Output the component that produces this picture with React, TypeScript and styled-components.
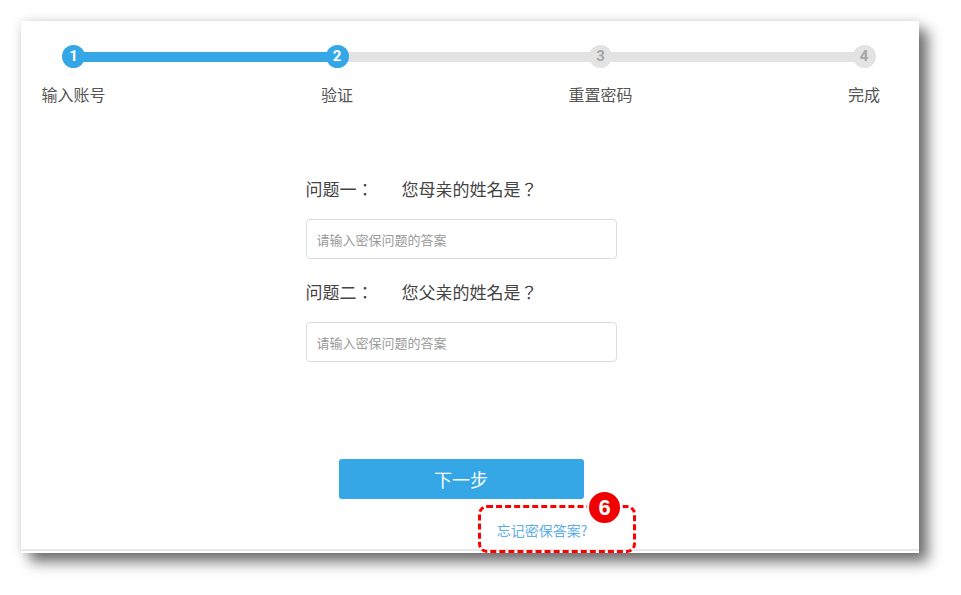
import React from "react";
import styled, { createGlobalStyle } from "styled-components";

const GlobalStyle = createGlobalStyle`
  html, body { margin: 0; padding: 0; background: #fff; }
  body {
    font-family: "Noto Sans CJK SC", "Noto Sans", "Liberation Sans", sans-serif;
    -webkit-font-smoothing: antialiased;
  }
  * { box-sizing: border-box; }
`;

const BLUE = "#35a6e6";
const GRAY = "#e3e3e3";

const Page = styled.div`
  padding: 21px 0 0 21px;
  width: 961px;
  height: 595px;
`;

const Card = styled.div`
  position: relative;
  width: 898px;
  height: 532px;
  background: #fff;
  padding-bottom: 2px;
  display: flex;
  flex-direction: column;
  box-shadow: 0 0 10px rgba(0, 0, 0, 0.12), 9px 9px 13px rgba(0, 0, 0, 0.55);
`;

const Content = styled.div`
  flex: 1;
  display: flex;
  flex-direction: column;
  border-bottom: 2px solid #e8e8e8;
`;

const Steps = styled.div<{ $progress: number }>`
  position: relative;
  display: flex;
  justify-content: space-between;
  margin: 24px 15px 0 12.5px;

  &::before {
    content: "";
    position: absolute;
    top: 6.5px;
    left: 40px;
    right: 40px;
    height: 10px;
    background: linear-gradient(
      to right,
      ${BLUE} 0,
      ${BLUE} ${(p) => p.$progress}%,
      ${GRAY} ${(p) => p.$progress}%,
      ${GRAY} 100%
    );
  }
`;

const Step = styled.div`
  width: 80px;
  display: flex;
  flex-direction: column;
  align-items: center;
`;

const Dot = styled.div<{ $active: boolean }>`
  position: relative;
  z-index: 1;
  width: 23px;
  height: 23px;
  border-radius: 50%;
  background: ${(p) => (p.$active ? BLUE : GRAY)};
  color: ${(p) => (p.$active ? "#fff" : "#a6a6a6")};
  font-family: "Roboto", "Liberation Sans", sans-serif;
  font-weight: 700;
  font-size: 15px;
  line-height: 23px;
  text-align: center;
`;

const StepLabel = styled.div`
  margin-top: 15px;
  font-size: 16px;
  line-height: 22px;
  color: #555;
  white-space: nowrap;
`;

const Body = styled.div`
  display: flex;
  flex-direction: column;
  align-items: center;
  padding-right: 18px;
`;

const Form = styled.div`
  width: 311px;
  margin-top: 72px;
  display: flex;
  flex-direction: column;
`;

const QuestionRow = styled.div<{ $first?: boolean }>`
  display: flex;
  margin-top: ${(p) => (p.$first ? "0" : "21px")};
  font-family: "Noto Sans CJK TC", "Noto Sans CJK SC", sans-serif;
  font-size: 17px;
  line-height: 24px;
  color: #444;
`;

const QLabel = styled.span`
  width: 96px;
  flex: none;
`;

const Answer = styled.input`
  display: block;
  width: 311px;
  height: 40px;
  margin-top: 18px;
  padding: 0 10px;
  border: 1px solid #dcdcdc;
  border-radius: 4px;
  outline: none;
  font-family: "Noto Sans CJK SC", sans-serif;
  font-size: 13px;
  color: #333;
  &::placeholder { color: #9a9a9a; }
`;

const NextButton = styled.button`
  margin-top: 97px;
  width: 245px;
  height: 40px;
  border: none;
  border-radius: 3px;
  background: ${BLUE};
  color: #fff;
  font-family: "Noto Sans CJK SC", sans-serif;
  font-size: 18px;
  cursor: pointer;
`;

const LinkRow = styled.div`
  width: 253px;
  margin-top: 20px;
  text-align: right;
  line-height: 20px;
`;

const ForgotLink = styled.a`
  font-size: 14px;
  color: #5eaee8;
  text-decoration: none;
  cursor: pointer;
`;

const Highlight = styled.div`
  position: absolute;
  left: 457px;
  top: 484px;
  width: 158px;
  height: 48px;
  border: 3px dashed #ff0000;
  border-radius: 9px;
  pointer-events: none;
`;

const Badge = styled.div`
  position: absolute;
  left: 566px;
  top: 469px;
  width: 35px;
  height: 35px;
  border-radius: 50%;
  border: 2px solid #fff;
  background: #f00000;
  color: #fff;
  font-family: "Liberation Sans", "DejaVu Sans", sans-serif;
  font-weight: 700;
  font-size: 22px;
  line-height: 31px;
  text-align: center;
`;

const steps = ["输入账号", "验证", "重置密码", "完成"];
const current = 2;

const questions = [
  { label: "问题一：", text: "您母亲的姓名是？" },
  { label: "问题二：", text: "您父亲的姓名是？" },
];

export default function App() {
  const progress = ((current - 1) / (steps.length - 1)) * 100;
  return (
    <>
      <GlobalStyle />
      <Page>
        <Card>
          <Content>
            <Steps $progress={progress}>
              {steps.map((s, i) => (
                <Step key={s}>
                  <Dot $active={i < current}>{i + 1}</Dot>
                  <StepLabel>{s}</StepLabel>
                </Step>
              ))}
            </Steps>
            <Body>
              <Form>
                {questions.map((q, i) => (
                  <React.Fragment key={q.label}>
                    <QuestionRow $first={i === 0}>
                      <QLabel>{q.label}</QLabel>
                      <span>{q.text}</span>
                    </QuestionRow>
                    <Answer placeholder="请输入密保问题的答案" />
                  </React.Fragment>
                ))}
              </Form>
              <NextButton>下一步</NextButton>
              <LinkRow>
                <ForgotLink>忘记密保答案?</ForgotLink>
              </LinkRow>
            </Body>
          </Content>
          <Highlight />
          <Badge>6</Badge>
        </Card>
      </Page>
    </>
  );
}
